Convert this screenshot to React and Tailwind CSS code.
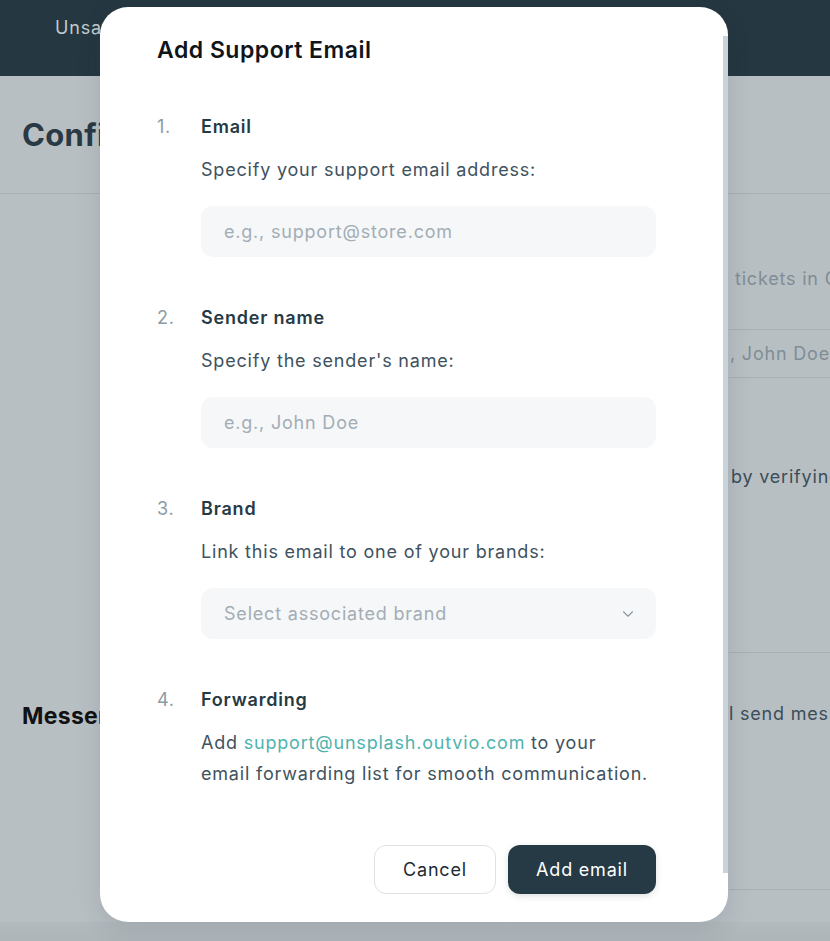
import { ChevronDown } from 'lucide-react';

const steps = [
  { n: '1.', label: 'Email', desc: 'Specify your support email address:', placeholder: 'e.g., support@store.com' },
  { n: '2.', label: 'Sender name', desc: "Specify the sender's name:", placeholder: 'e.g., John Doe' },
  { n: '3.', label: 'Brand', desc: 'Link this email to one of your brands:', placeholder: 'Select associated brand', select: true },
];

function Step({ n, label, children }) {
  return (
    <div className="flex">
      <div className="w-[44px] shrink-0 text-[18px] leading-[26px] text-[#8e9aa3]">{n}</div>
      <div className="flex-1">
        <div className="text-[18px] leading-[26px] font-semibold text-[#263a45]">{label}</div>
        {children}
      </div>
    </div>
  );
}

export default function App() {
  return (
    <div className="relative w-[830px] h-[941px] overflow-hidden bg-[#b8bfc3] tracking-[0.8px]" style={{ fontFamily: 'Inter, "Noto Sans", sans-serif' }}>
      {/* page behind the overlay */}
      <div className="h-[76px] bg-[#253740] px-[55px] pt-[16px] text-[18px] leading-[24px] text-[#c3cace]">Unsaved changes</div>
      <div className="h-[118px] border-b border-[#a8b0b5] px-[22px] pt-[40px] text-[31px] leading-[38px] font-bold tracking-[0.3px] text-[#2a3a44]">Configuration</div>
      <div className="flex">
        <div className="w-[729px] shrink-0">
          <div className="h-[508px]" />
          <div className="px-[22px] text-[23px] leading-[28px] font-bold tracking-[0.3px] text-[#111]">Messenger</div>
        </div>
        <div className="flex-1 overflow-hidden whitespace-nowrap text-[18px]">
          <div className="h-[136px] border-b border-[#a8b0b5] pt-[72px] pl-[6px] leading-[26px] text-[#7f8d96]">tickets in Outvio</div>
          <div className="h-[48px] border-b border-[#a8b0b5] pt-[11px] pl-[1px] leading-[26px] text-[#7f8d96]">, John Doe</div>
          <div className="h-[275px] border-b border-[#a8b0b5] pt-[86px] pl-[2px] leading-[26px] text-[#3b4d58]">by verifying</div>
          <div className="h-[237px] border-b border-[#a8b0b5] pt-[48px] leading-[26px] text-[#3b4d58]">l send messages</div>
        </div>
      </div>
      <div className="mt-[32px] h-[40px] bg-gradient-to-b from-[#b3babe] to-[#a9b0b4]" />

      {/* modal */}
      <div className="absolute left-[100px] top-[7px] w-[628px] h-[915px] rounded-[28px] bg-white shadow-[0_8px_24px_rgba(30,45,55,0.12)] pl-[57px] pr-[72px] pt-[29px]">
        <div className="absolute right-0 top-[29px] h-[837px] w-[5px] bg-[#c9d4da]" />
        <h2 className="text-[23px] leading-[28px] font-semibold tracking-[0.5px] text-[#111418]">Add Support Email</h2>

        <div className="mt-[50px] flex flex-col gap-[48px]">
          {steps.map((s) => (
            <Step key={s.n} n={s.n} label={s.label}>
              <div className="mt-[14px] text-[18px] leading-[31px] text-[#3e5260]">{s.desc}</div>
              <div className="mt-[21px] h-[51px] rounded-[12px] bg-[#f5f7f8] px-[23px] flex items-center justify-between text-[18px] text-[#a3adb5]">
                <span>{s.placeholder}</span>
                {s.select && <ChevronDown size={18} strokeWidth={1.5} className="text-[#8d979e] -mr-[4px]" />}
              </div>
            </Step>
          ))}
          <Step n="4." label="Forwarding">
            <div className="mt-[14px] text-[18px] leading-[31px] text-[#3e5260]">
              Add <span className="text-[#4fb3ad]">support@unsplash.outvio.com</span> to your
              <br />
              email forwarding list for smooth communication.
            </div>
          </Step>
        </div>

        <div className="mt-[56px] flex justify-end gap-[12px]">
          <button className="h-[49px] w-[122px] rounded-[12px] border border-[#dde2e5] bg-white text-[18px] text-[#1c2b33]">Cancel</button>
          <button className="h-[49px] w-[148px] rounded-[12px] bg-[#263a45] text-[18px] text-white shadow-[0_2px_6px_rgba(30,45,55,0.15)]">Add email</button>
        </div>
      </div>
    </div>
  );
}
